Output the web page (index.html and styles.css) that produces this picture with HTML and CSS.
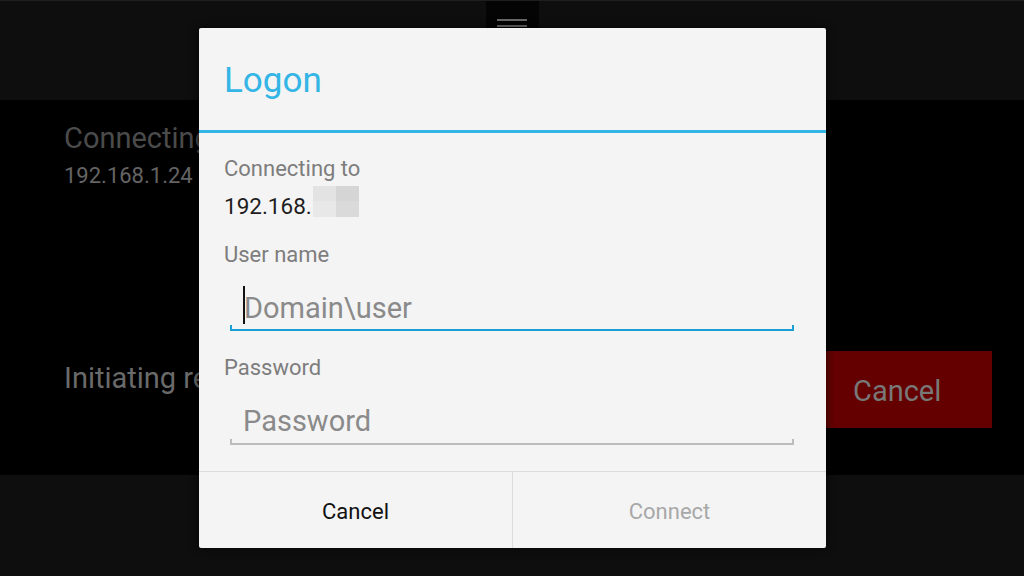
FILE: index.html
```html
<!DOCTYPE html>
<html lang="en">
<head>
<meta charset="utf-8">
<title>Logon</title>
<link rel="stylesheet" href="styles.css">
</head>
<body>
<div class="screen">
  <header class="topbar">
    <div class="menu-tab">
      <span class="menu-line"></span>
      <span class="menu-line"></span>
      <span class="menu-line"></span>
    </div>
  </header>
  <main class="content">
    <div class="status-title">Connecting</div>
    <div class="status-host">192.168.1.24</div>
    <div class="status-row">
      <div class="status-text">Initiating re</div>
      <div class="red-cancel">Cancel</div>
    </div>
  </main>
  <footer class="bottombar"></footer>

  <div class="dialog">
    <div class="dialog-title">Logon</div>
    <div class="dialog-rule"></div>
    <div class="dialog-body">
      <div class="label label-first">Connecting to</div>
      <div class="host-row">
        <span class="host-text">192.168.</span>
        <span class="pixelated">
          <span class="px px1"></span><span class="px px2"></span>
          <span class="px px3"></span><span class="px px4"></span>
        </span>
      </div>
      <div class="label label-user">User name</div>
      <div class="field">
        <div class="field-text">
          <span class="caret"></span>
          <span class="placeholder placeholder-caret">Domain\user</span>
        </div>
        <div class="field-line field-line-active"></div>
      </div>
      <div class="label label-pass">Password</div>
      <div class="field field-pass">
        <div class="field-text">
          <span class="placeholder placeholder-pass">Password</span>
        </div>
        <div class="field-line"></div>
      </div>
    </div>
    <div class="dialog-buttons">
      <div class="dbtn dbtn-cancel">Cancel</div>
      <div class="dbtn dbtn-connect">Connect</div>
    </div>
  </div>
</div>
</body>
</html>
```
FILE: styles.css
```css
html, body {
  margin: 0;
  padding: 0;
}
body {
  width: 1024px;
  height: 576px;
  overflow: hidden;
  background: #000;
  font-family: Roboto, "Noto Sans", "Liberation Sans", sans-serif;
}
.screen {
  position: relative;
  width: 1024px;
  height: 576px;
  display: flex;
  flex-direction: column;
}
.topbar {
  height: 99px;
  border-top: 1px solid #1e1e1e;
  background: #0e0e0e;
  display: flex;
  justify-content: center;
}
.menu-tab {
  width: 53px;
  height: 45px;
  background: #040404;
  display: flex;
  flex-direction: column;
  align-items: center;
  padding-top: 18px;
  box-sizing: border-box;
  gap: 4px;
}
.menu-line {
  display: block;
  width: 30px;
  height: 2px;
  background: #6a6a6a;
}
.content {
  height: 375px;
  box-sizing: border-box;
  padding: 21px 32px 0 65px;
  background: #000;
}
.status-title {
  font-size: 29px;
  line-height: 34px;
  color: #4b4b4b;
  white-space: nowrap;
  margin-left: -1px;
}
.status-host {
  margin-top: 8px;
  font-size: 22px;
  line-height: 26px;
  color: #646464;
  white-space: nowrap;
  margin-left: -1px;
}
.status-row {
  margin-top: 162px;
  display: flex;
  justify-content: space-between;
  align-items: flex-start;
}
.status-text {
  margin-top: 10px;
  font-size: 29px;
  line-height: 34px;
  color: #6a6a6a;
  white-space: nowrap;
  margin-left: -1px;
}
.red-cancel {
  width: 166px;
  height: 77px;
  box-sizing: border-box;
  padding: 2px 0 0 27px;
  background: #650000;
  color: #787878;
  font-size: 29px;
  display: flex;
  align-items: center;
}
.bottombar {
  flex: 1;
  background: #0e0e0e;
}

/* dialog */
.dialog {
  position: absolute;
  left: 199px;
  top: 28px;
  width: 627px;
  height: 520px;
  background: #f4f4f4;
  border-radius: 2px;
  box-shadow: 0 0 10px rgba(0, 0, 0, 0.7);
  display: flex;
  flex-direction: column;
}
.dialog-title {
  height: 102px;
  box-sizing: border-box;
  padding: 32px 0 0 25px;
  font-size: 35px;
  line-height: 42px;
  color: #33b5e5;
}
.dialog-rule {
  height: 3px;
  background: #33b5e5;
}
.dialog-body {
  flex: 1;
  padding: 23px 32px 0 25px;
}
.label {
  font-size: 22px;
  line-height: 26px;
  color: #7d7d7d;
}
.host-row {
  margin-top: 4px;
  display: flex;
  align-items: flex-start;
}
.host-text {
  margin-top: 7px;
  font-size: 22.5px;
  line-height: 26px;
  color: #1e1e1e;
}
.pixelated {
  display: grid;
  grid-template-columns: 23px 23px;
  grid-template-rows: 15px 16px;
  margin-left: 1px;
}
.px1 { background: #e3e3e3; }
.px2 { background: #d5d5d5; }
.px3 { background: #e8e8e8; }
.px4 { background: #dadada; }
.label-user {
  margin-top: 23px;
}
.field {
  margin: 21px 0 0 6px;
  width: 564px;
}
.field-text {
  height: 36px;
  box-sizing: border-box;
  padding-left: 13px;
  display: flex;
  align-items: flex-start;
}
.caret {
  width: 2px;
  height: 38px;
  margin-top: -3px;
  background: #111;
}
.placeholder {
  font-size: 29px;
  line-height: 34px;
  color: #8a8a8a;
}
.placeholder-caret {
  margin-left: -1px;
  margin-top: 2px;
}
.placeholder-pass {
  margin-top: 1px;
}
.field-line {
  height: 4px;
  border: 2px solid #bcbcbc;
  border-top: none;
}
.field-line-active {
  border-color: #1a9ed6;
}
.label-pass {
  margin-top: 24px;
}
.field-pass {
  margin-top: 22px;
}
.dialog-buttons {
  height: 77px;
  box-sizing: border-box;
  border-top: 1px solid #dcdcdc;
  display: flex;
}
.dbtn {
  flex: 1;
  display: flex;
  align-items: center;
  justify-content: center;
  font-size: 22px;
  padding-top: 3px;
}
.dbtn-cancel {
  color: #111;
  border-right: 1px solid #dcdcdc;
}
.dbtn-connect {
  color: #a8a8a8;
}
```
